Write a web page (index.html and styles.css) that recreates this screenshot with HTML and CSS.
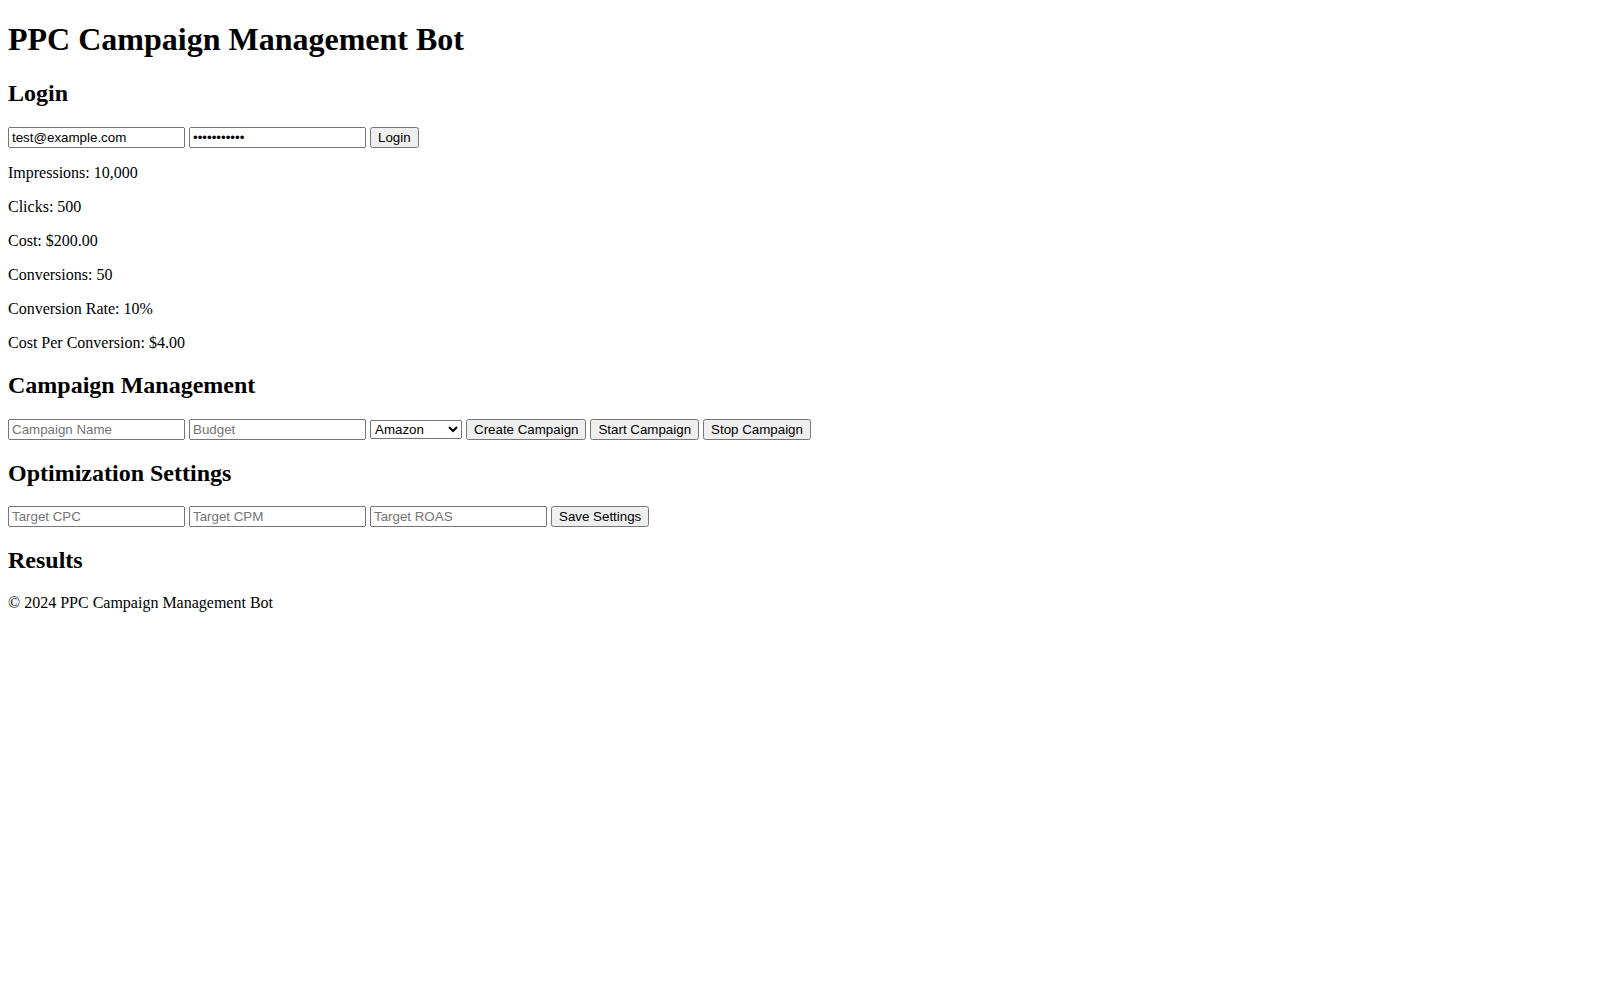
FILE: index.html
```html
<!DOCTYPE html>
<html lang="en">
<head>
<meta charset="utf-8">
<title>PPC Campaign Management Bot</title>
<link rel="stylesheet" href="styles.css">
</head>
<body class="page">
<header>
<h1 class="title">PPC Campaign Management Bot</h1>
</header>
<main>
<section class="login">
<h2 class="section-title">Login</h2>
<form class="row">
<input class="field" type="email" value="test@example.com">
<input class="field" type="password" value="password123">
<button class="btn" type="button">Login</button>
</form>
</section>
<section class="dashboard">
<p class="stat">Impressions: 10,000</p>
<p class="stat">Clicks: 500</p>
<p class="stat">Cost: $200.00</p>
<p class="stat">Conversions: 50</p>
<p class="stat">Conversion Rate: 10%</p>
<p class="stat">Cost Per Conversion: $4.00</p>
</section>
<section class="campaigns">
<h2 class="section-title">Campaign Management</h2>
<form class="row">
<input class="field" type="text" placeholder="Campaign Name">
<input class="field" type="number" placeholder="Budget">
<select class="select">
<option>Amazon</option>
<option>Google Ads</option>
<option>Facebook</option>
</select>
<button class="btn" type="button">Create Campaign</button>
<button class="btn" type="button">Start Campaign</button>
<button class="btn" type="button">Stop Campaign</button>
</form>
</section>
<section class="optimization">
<h2 class="section-title">Optimization Settings</h2>
<form class="row">
<input class="field" type="number" placeholder="Target CPC">
<input class="field" type="number" placeholder="Target CPM">
<input class="field" type="number" placeholder="Target ROAS">
<button class="btn" type="button">Save Settings</button>
</form>
</section>
<section class="results">
<h2 class="section-title">Results</h2>
<div class="results-body"></div>
</section>
</main>
<footer class="footer">
<p class="copy">&copy; 2024 PPC Campaign Management Bot</p>
</footer>
</body>
</html>
```

FILE: styles.css
```css
.page {
  margin: 0 8px 8px;
  font-family: "Liberation Serif", "Times New Roman", serif;
  font-size: 16px;
  color: #000;
  background: #fff;
}
.title {
  font-size: 2em;
  margin: 0.67em 0;
  font-weight: bold;
}
.section-title {
  font-size: 1.5em;
  margin: 0.83em 0;
  font-weight: bold;
}
.row {
  margin: 0;
}
.field,
.select,
.btn {
  font-family: "Liberation Sans", Arial, sans-serif;
  font-size: 13.3333px;
}
.field {
  box-sizing: border-box;
  width: 177px;
}
.stat,
.copy {
  margin: 1em 0;
}
```
